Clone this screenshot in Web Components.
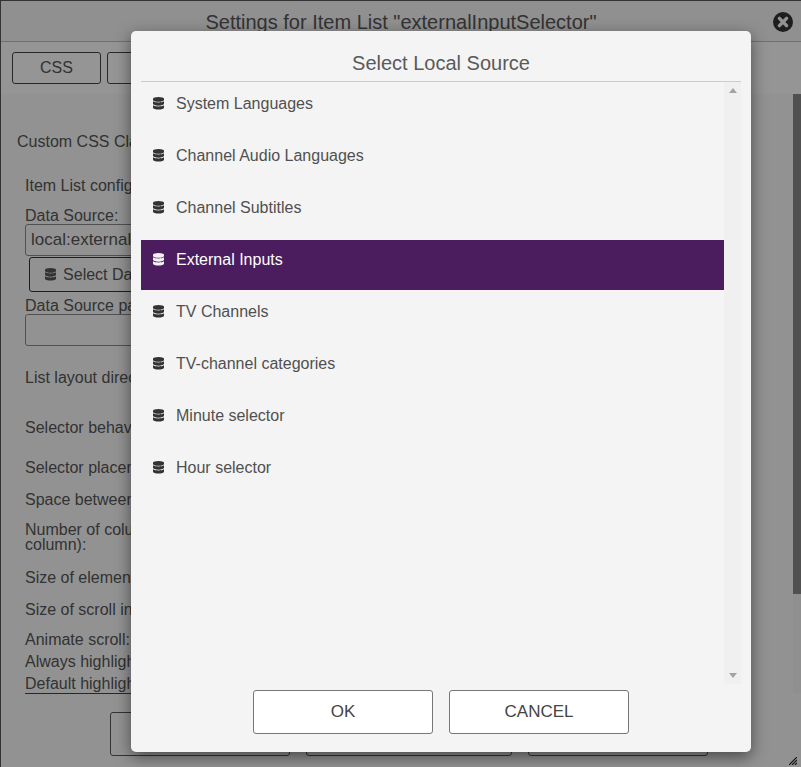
<!DOCTYPE html>
<html><head><meta charset="utf-8">
<style>
html,body{margin:0;padding:0;height:100%;overflow:hidden;background:#555;font-family:"Liberation Sans",Arial,sans-serif}
</style></head><body>
<settings-window></settings-window>
<local-source-dialog></local-source-dialog>
<script>
const DB='<svg viewBox="0 0 448 512" width="11" height="12.6" aria-hidden="true"><path fill="currentColor" d="M448 73.143v45.714C448 159.143 347.667 192 224 192S0 159.143 0 118.857V73.143C0 32.857 100.333 0 224 0s224 32.857 224 73.143zM448 176v102.857C448 319.143 347.667 352 224 352S0 319.143 0 278.857V176c48.125 33.143 136.208 48.572 224 48.572S399.874 209.143 448 176zm0 160v102.857C448 479.143 347.667 512 224 512S0 479.143 0 438.857V336c48.125 33.143 136.208 48.572 224 48.572S399.874 369.143 448 336z"/></svg>';
class DbIcon extends HTMLElement{constructor(){super();this.attachShadow({mode:'open'}).innerHTML='<style>:host{display:inline-flex;width:11px;height:13px;flex:none}</style>'+DB}}
customElements.define('db-icon',DbIcon);

class UiButton extends HTMLElement{constructor(){super();this.attachShadow({mode:'open'}).innerHTML=`<style>
:host{display:flex;align-items:center;justify-content:center;box-sizing:border-box;border:1px solid var(--bc,#777);border-radius:3px;background:var(--bg,transparent);color:var(--fc,#555);font-size:var(--fs,16px);height:var(--h,44px);width:var(--w,180px);flex:none;gap:7px}
</style><slot></slot>`}}
customElements.define('ui-button',UiButton);

class FieldRow extends HTMLElement{constructor(){super();this.attachShadow({mode:'open'}).innerHTML=`<style>
:host{display:block;font-size:16px;line-height:var(--lh,16px);color:#555;margin-top:var(--mt,0)}
</style><slot></slot>`}}
customElements.define('field-row',FieldRow);

class SettingsWindow extends HTMLElement{constructor(){super();this.attachShadow({mode:'open'}).innerHTML=`<style>
:host{display:flex;flex-direction:column;box-sizing:border-box;margin:1px 0 0 1px;height:766px;background:#f4f4f4;color:#555;position:relative}
.head{height:41px;flex:none;border-bottom:1px solid #bbb;display:flex;align-items:center;justify-content:center;font-size:20px;padding-top:3px;box-sizing:border-box;position:relative;background:#f1f1f1}
.close{position:absolute;right:8px;top:11px;width:20px;height:20px}
.tabs{height:52px;flex:none;background:#f8f8f8;display:flex;gap:6px;padding:10px 0 0 11px;box-sizing:border-box;--w:89px;--h:32px;--bc:#444}
.body{flex:1;display:flex;min-height:0}
.form{flex:1;padding:40px 0 0 16px;box-sizing:border-box;min-width:0}
.sb{width:8px;flex:none;height:599px;background:#efefef}
.thumb{height:500px;background:#858585}
.in{padding-left:8px;width:500px}
.box{box-sizing:border-box;height:32px;border:1px solid #888;border-radius:3px;width:400px;padding-left:5px;display:flex;align-items:center;font-size:17px}
.foot{display:flex;gap:16px;padding-left:93px;margin-top:18px;--h:44px;--bc:#555}
.grip{position:absolute;right:4px;bottom:2px;width:8px;height:8px}
u{text-decoration:none;display:block;border-bottom:1px solid #444;height:17px}
</style>
<div class="head">Settings for Item List "externalInputSelector"
<svg class="close" viewBox="0 0 20 20" aria-hidden="true"><circle cx="10" cy="10" r="10" fill="#333"/><path d="M6.4 6.4L13.6 13.6M13.6 6.4L6.4 13.6" stroke="#f4f4f4" stroke-width="3.4" stroke-linecap="round"/></svg></div>
<div class="tabs"><ui-button>CSS</ui-button><ui-button>Item</ui-button></div>
<div class="body"><div class="form">
<field-row>Custom CSS Classes:</field-row>
<div class="in">
<field-row style="--mt:28px">Item List configuration</field-row>
<field-row style="--mt:14px">Data Source:</field-row>
<div class="box">local:externalInputs</div>
<ui-button style="--w:188px;--h:35px;--bc:#333;margin:1px 0 0 4px"><db-icon></db-icon>Select Data Source</ui-button>
<field-row style="--mt:6px">Data Source parameters:</field-row>
<div class="box"></div>
<field-row style="--mt:24px">List layout direction:</field-row>
<field-row style="--mt:34px">Selector behavior:</field-row>
<field-row style="--mt:24px">Selector placement:</field-row>
<field-row style="--mt:16px">Space between elements:</field-row>
<field-row style="--mt:14px;--lh:15px">Number of columns (or rows if<br>column):</field-row>
<field-row style="--mt:18px">Size of elements:</field-row>
<field-row style="--mt:16px">Size of scroll indicator:</field-row>
<field-row style="--mt:14px">Animate scroll:</field-row>
<field-row style="--mt:6px">Always highlight selection:</field-row>
<field-row style="--mt:6px"><u>Default highlighted element:</u></field-row>
</div>
<div class="foot"><ui-button>SAVE</ui-button><ui-button style="--w:206px">RESET</ui-button><ui-button>CANCEL</ui-button></div>
</div><div class="sb"><div class="thumb"></div></div></div>
<svg class="grip" viewBox="0 0 8 8" aria-hidden="true"><path d="M0 8L8 0M3 8L8 3M6 8L8 6" stroke="#222" stroke-width="1.2"/></svg>`}}
customElements.define('settings-window',SettingsWindow);

class SourceItem extends HTMLElement{constructor(){super();this.attachShadow({mode:'open'}).innerHTML=`<style>
:host{display:flex;gap:12px;box-sizing:border-box;height:50px;padding:11px 0 0 12px;font-size:16px;line-height:18px;color:#505050;flex:none}
:host([selected]){background:#4b1d5e;color:#fff}
db-icon{margin-top:2px;color:#333}
:host([selected]) db-icon{color:#f4f0f6}
</style><db-icon></db-icon><span><slot></slot></span>`}}
customElements.define('source-item',SourceItem);

class LocalSourceDialog extends HTMLElement{constructor(){super();this.attachShadow({mode:'open'}).innerHTML=`<style>
:host{position:absolute;inset:0;background:rgba(0,0,0,.4);display:block}
.dlg{position:absolute;left:131px;top:31px;width:620px;height:721px;background:#f4f4f4;border-radius:5px;box-shadow:0 5px 16px rgba(0,0,0,.5);box-sizing:border-box;padding:0 10px;display:flex;flex-direction:column}
.title{height:51px;flex:none;border-bottom:1px solid #ccc;text-align:center;font-size:20px;line-height:24px;padding-top:20px;box-sizing:border-box;color:#5a5a5a}
.scroll{height:602px;flex:none;display:flex}
.list{flex:1;display:flex;flex-direction:column;gap:2px;padding-top:2px}
.sb{width:17px;flex:none;background:#f0f0f0;display:flex;flex-direction:column;justify-content:space-between;align-items:center;padding:6px 0}
.tri{width:0;height:0;border-left:4px solid transparent;border-right:4px solid transparent}
.up{border-bottom:5px solid #a3a3a3}.dn{border-top:5px solid #a3a3a3}
.btns{display:flex;justify-content:center;gap:16px;margin-top:6px;--bg:#fff;--bc:#777;--fc:#444;--fs:17px}
</style>
<div class="dlg"><div class="title">Select Local Source</div>
<div class="scroll"><div class="list">
<source-item>System Languages</source-item>
<source-item>Channel Audio Languages</source-item>
<source-item>Channel Subtitles</source-item>
<source-item selected>External Inputs</source-item>
<source-item>TV Channels</source-item>
<source-item>TV-channel categories</source-item>
<source-item>Minute selector</source-item>
<source-item>Hour selector</source-item>
</div><div class="sb"><div class="tri up"></div><div class="tri dn"></div></div></div>
<div class="btns"><ui-button>OK</ui-button><ui-button>CANCEL</ui-button></div>
</div>`}}
customElements.define('local-source-dialog',LocalSourceDialog);
</script></body></html>
